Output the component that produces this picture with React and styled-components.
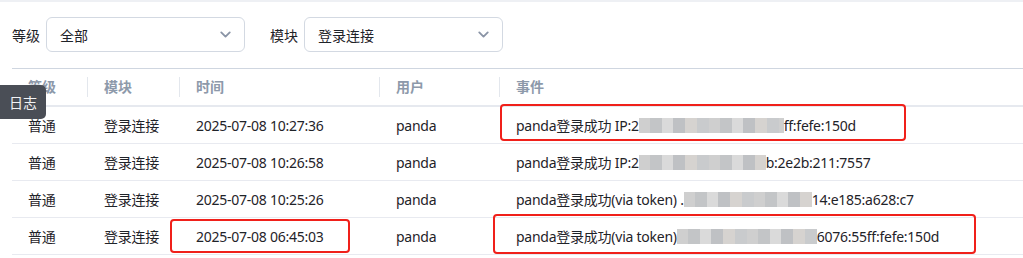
import React from 'react';
import styled, { createGlobalStyle } from 'styled-components';
import { ChevronDown } from 'lucide-react';

const GlobalStyle = createGlobalStyle`
	body {
		margin: 0;
		background: #fff;
		font-family: 'Noto Sans', 'Noto Sans CJK SC', sans-serif;
		color: #1f2329;
	}
`;

const rows = [
	{ level: '普通', module: '登录连接', time: '2025-07-08 10:27:36', user: 'panda', head: 'panda登录成功 IP:2', blur: 145, tail: 'ff:fefe:150d', mark: 'event' },
	{ level: '普通', module: '登录连接', time: '2025-07-08 10:26:58', user: 'panda', head: 'panda登录成功 IP:2', blur: 127, tail: 'b:2e2b:211:7557' },
	{ level: '普通', module: '登录连接', time: '2025-07-08 10:25:26', user: 'panda', head: 'panda登录成功(via token) .', blur: 128, tail: '14:e185:a628:c7' },
	{ level: '普通', module: '登录连接', time: '2025-07-08 06:45:03', user: 'panda', head: 'panda登录成功(via token)', blur: 140, tail: '6076:55ff:fefe:150d', mark: 'both' },
];

const App = () => {
	return (
		<Page>
			<GlobalStyle />
			<Filters>
				<Label>等级</Label>
				<Select>
					<span>全部</span>
					<ChevronDown size={17} strokeWidth={2.6} color="#8a94a6" />
				</Select>
				<Label>模块</Label>
				<Select>
					<span>登录连接</span>
					<ChevronDown size={17} strokeWidth={2.6} color="#8a94a6" />
				</Select>
			</Filters>
			<Table>
				<HeadRow>
					<HeadCell>等级</HeadCell>
					<HeadCell $sep>模块</HeadCell>
					<HeadCell $sep>时间</HeadCell>
					<HeadCell $sep>用户</HeadCell>
					<HeadCell $sep>事件</HeadCell>
				</HeadRow>
				{rows.map((r, i) => (
					<Row key={i}>
						<Cell>{r.level}</Cell>
						<Cell>{r.module}</Cell>
						<Cell>
							{r.time}
							{r.mark === 'both' && <Mark $left={-10} $top={1} $width={180} $height={34} />}
						</Cell>
						<Cell>{r.user}</Cell>
						<Cell>
							{r.head}
							<Blur style={{ width: r.blur }} />
							{r.tail}
							{r.mark === 'event' && <Mark $left={0} $top={-3} $width={406} $height={37} />}
							{r.mark === 'both' && <Mark $left={-7} $top={-4} $width={483} $height={40} />}
						</Cell>
					</Row>
				))}
			</Table>
			<Tip>日志</Tip>
		</Page>
	);
};

const Page = styled.div`
	position: relative;
	width: 1023px;
	height: 258px;
	overflow: hidden;
	border-top: 2px solid #eef0f4;
	box-sizing: border-box;
`;

const Filters = styled.div`
	display: flex;
	align-items: center;
	margin-left: 12px;
	padding: 15px 0 16px;
	border-bottom: 1px solid #cfd6e0;
`;

const Label = styled.span`
	font-size: 14px;
	margin-right: 6px;
	&:nth-of-type(2) {
		margin-left: 25px;
	}
`;

const Select = styled.div`
	width: 199px;
	height: 35px;
	box-sizing: border-box;
	border: 1px solid #d3d9e2;
	border-radius: 6px;
	display: flex;
	align-items: center;
	justify-content: space-between;
	padding: 0 10px 0 13px;
	font-size: 14px;
`;

const Table = styled.div`
	margin-left: 12px;
`;

const HeadRow = styled.div`
	display: grid;
	grid-template-columns: 76px 92px 200px 120px 1fr;
	height: 36px;
	align-items: center;
	border-bottom: 2px solid #e6e9ef;
`;

const HeadCell = styled.div`
	padding-left: 16px;
	font-size: 14px;
	font-weight: 600;
	color: #8d99aa;
	height: 20px;
	line-height: 20px;
	margin-left: ${(p) => (p.$sep ? '-1px' : '0')};
	border-left: ${(p) => (p.$sep ? '1px solid #e3e7ed' : 'none')};
`;

const Row = styled.div`
	display: grid;
	grid-template-columns: 76px 92px 200px 120px 1fr;
	height: 37px;
	align-items: center;
	border-bottom: 1px solid #e8eaf0;
	box-sizing: border-box;
`;

const Cell = styled.div`
	position: relative;
	padding-left: 16px;
	font-size: 14px;
	letter-spacing: -0.25px;
	white-space: nowrap;
	display: flex;
	align-items: center;
	height: 100%;
`;

const Blur = styled.span`
	display: inline-block;
	height: 15px;
	background: repeating-linear-gradient(
		90deg,
		#cfcfcf 0 11px,
		#c3c5c7 11px 23px,
		#dadada 23px 34px,
		#bfc1c4 34px 46px,
		#d6d3d0 46px 58px,
		#c9cbcd 58px 70px
	);
`;

const Mark = styled.div`
	position: absolute;
	left: ${(p) => p.$left}px;
	top: ${(p) => p.$top}px;
	width: ${(p) => p.$width}px;
	height: ${(p) => p.$height}px;
	border: 2.5px solid #f0201a;
	border-radius: 4px;
	box-sizing: border-box;
	pointer-events: none;
`;

const Tip = styled.div`
	position: absolute;
	left: 0;
	top: 83px;
	width: 46px;
	height: 34px;
	background: #4a4e56;
	border-radius: 0 5px 5px 0;
	color: #f2f3f5;
	font-size: 14px;
	display: flex;
	align-items: center;
	justify-content: center;
`;

export default App;
